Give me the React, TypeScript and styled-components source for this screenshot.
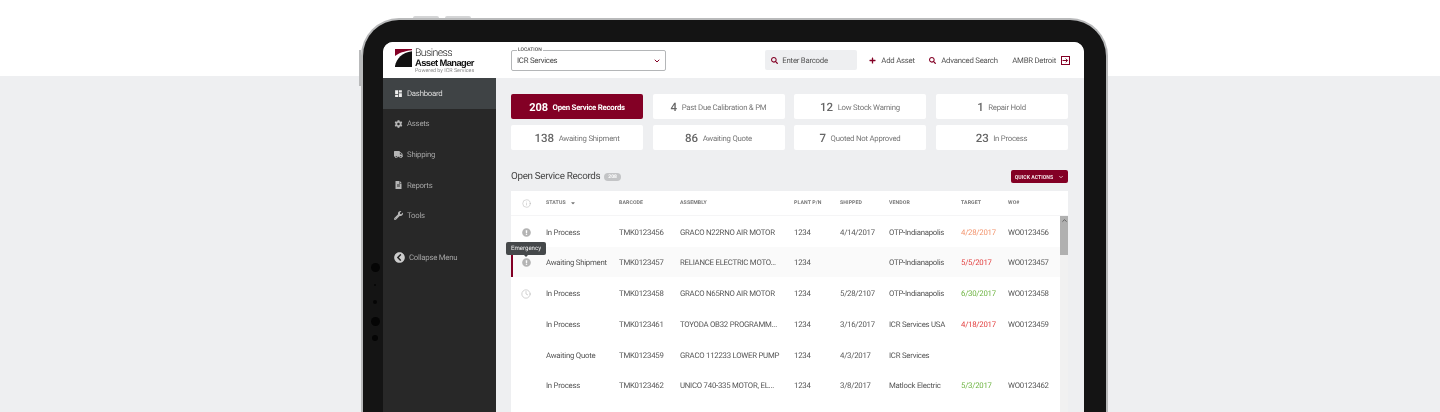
import React from 'react';
import styled, { createGlobalStyle } from 'styled-components';
import {
  FaCog,
  FaTruck,
  FaFileAlt,
  FaWrench,
  FaChevronCircleLeft,
  FaSearch,
  FaPlus,
  FaExclamationCircle,
  FaCaretDown,
} from 'react-icons/fa';
import { MdDashboard } from 'react-icons/md';
import { ChevronDown, ChevronUp, Info, Clock } from 'lucide-react';

const MAROON = '#830025';
const BODY_TEXT = 'font-size: 7.8px; letter-spacing: -0.25px;';

const GlobalStyle = createGlobalStyle`
  html, body { margin: 0; padding: 0; height: 412px; overflow: hidden; }
  body {
    background: linear-gradient(#fff 0, #fff 76px, #eeeff1 76px);
    font-family: Roboto, "Liberation Sans", sans-serif;
    color: #555;
    text-rendering: geometricPrecision;
  }
`;

type Flag = 'none' | 'alert' | 'clock';
type Tone = 'orange' | 'red' | 'green' | undefined;

type Record = {
  flag: Flag;
  status: string;
  barcode: string;
  assembly: string;
  shipped: string;
  vendor: string;
  target: string;
  tone?: Tone;
  wo: string;
};

const navItems = [
  { label: 'Dashboard', icon: <MdDashboard size={9} />, active: true },
  { label: 'Assets', icon: <FaCog size={8} /> },
  { label: 'Shipping', icon: <FaTruck size={9} /> },
  { label: 'Reports', icon: <FaFileAlt size={8} /> },
  { label: 'Tools', icon: <FaWrench size={9} /> },
];

const stats = [
  { num: '208', label: 'Open Service Records', primary: true },
  { num: '4', label: 'Past Due Calibration & PM' },
  { num: '12', label: 'Low Stock Warning' },
  { num: '1', label: 'Repair Hold' },
  { num: '138', label: 'Awaiting Shipment' },
  { num: '86', label: 'Awaiting Quote' },
  { num: '7', label: 'Quoted Not Approved' },
  { num: '23', label: 'In Process' },
];

const records: Record[] = [
  { flag: 'alert', status: 'In Process', barcode: 'TMK0123456', assembly: 'GRACO N22RNO AIR MOTOR', shipped: '4/14/2017', vendor: 'OTP-Indianapolis', target: '4/28/2017', tone: 'orange', wo: 'WO0123456' },
  { flag: 'alert', status: 'Awaiting Shipment', barcode: 'TMK0123457', assembly: 'RELIANCE ELECTRIC MOTO...', shipped: '', vendor: 'OTP-Indianapolis', target: '5/5/2017', tone: 'red', wo: 'WO0123457' },
  { flag: 'clock', status: 'In Process', barcode: 'TMK0123458', assembly: 'GRACO N65RNO AIR MOTOR', shipped: '5/28/2107', vendor: 'OTP-Indianapolis', target: '6/30/2017', tone: 'green', wo: 'WO0123458' },
  { flag: 'none', status: 'In Process', barcode: 'TMK0123461', assembly: 'TOYODA OB32 PROGRAMM...', shipped: '3/16/2017', vendor: 'ICR Services USA', target: '4/18/2017', tone: 'red', wo: 'WO0123459' },
  { flag: 'none', status: 'Awaiting Quote', barcode: 'TMK0123459', assembly: 'GRACO 112233 LOWER PUMP', shipped: '4/3/2017', vendor: 'ICR Services', target: '', wo: '' },
  { flag: 'none', status: 'In Process', barcode: 'TMK0123462', assembly: 'UNICO 740-335 MOTOR, EL...', shipped: '3/8/2017', vendor: 'Matlock Electric', target: '5/3/2017', tone: 'green', wo: 'WO0123462' },
];

const toneColor = { orange: '#f2936c', red: '#e23b3b', green: '#6cb33f' };

const COLUMNS = '35px 73px 61px 114px 46px 49px 72px 47px 1fr';

const Stage = styled.div`
  display: flex;
  padding: 18px 0 0 361px;
  height: 394px;
  overflow: hidden;
`;

const Tablet = styled.div`
  position: relative;
  box-sizing: border-box;
  width: 747px;
  height: 394px;
  flex: none;
  padding: 22px 22px 0 20px;
  background: #141414;
  border: solid #b9babb;
  border-width: 2px 2px 0 2px;
  border-radius: 38px 38px 0 0;
  filter: blur(0.3px);
`;

const TopButton = styled.span<{ $left: number }>`
  position: absolute;
  top: -4px;
  left: ${(p) => p.$left}px;
  width: 26px;
  height: 2px;
  border-radius: 2px 2px 0 0;
  background: #d4d5d6;
`;

const SideButton = styled.span`
  position: absolute;
  left: -4px;
  top: 30px;
  width: 2px;
  height: 36px;
  background: #b9babb;
`;

const Lens = styled.span<{ $top: number; $size: number }>`
  position: absolute;
  left: ${(p) => 12 - p.$size / 2}px;
  top: ${(p) => p.$top - p.$size / 2}px;
  width: ${(p) => p.$size}px;
  height: ${(p) => p.$size}px;
  border-radius: 50%;
  background: #050505;
`;

const Screen = styled.div`
  height: 370px;
  display: flex;
  flex-direction: column;
  border-radius: 10px 10px 0 0;
  overflow: hidden;
  background: #eeeff1;
`;

const Header = styled.header`
  height: 36px;
  flex: none;
  display: flex;
  align-items: center;
  padding-right: 14px;
  background: #fff;
`;

const LogoWrap = styled.div`
  width: 128px;
  flex: none;
  box-sizing: border-box;
  padding: 3px 0 0 12px;
  display: flex;
  align-items: flex-start;
  gap: 3px;
`;

const LogoText = styled.div`
  display: flex;
  flex-direction: column;
  color: #222;
`;

const LogoLight = styled.span`
  margin-top: -1px;
  font-size: 10.5px;
  line-height: 10px;
  letter-spacing: -0.6px;
  font-weight: 300;
`;

const LogoBold = styled.span`
  font-family: "Liberation Sans", sans-serif;
  font-size: 9.4px;
  line-height: 10px;
  font-weight: 700;
  letter-spacing: -0.6px;
  color: #111;
`;

const LogoSmall = styled.span`
  font-size: 5.4px;
  line-height: 6px;
  color: #888;
`;

const LocationBox = styled.fieldset`
  box-sizing: border-box;
  margin: -2px 0 0 0;
  padding: 0 4px 0 5px;
  width: 155px;
  height: 23px;
  min-width: 0;
  display: flex;
  align-items: center;
  justify-content: space-between;
  border: 1px solid #b4b6b8;
  border-radius: 2px;
  ${BODY_TEXT}
  color: #444;
  & > legend {
    margin-left: 0;
    padding: 0 1px;
    font-size: 5px;
    letter-spacing: 0;
    line-height: 5px;
    font-weight: 500;
    color: #555;
  }
`;

const LocationValue = styled.div`
  display: flex;
  flex: 1;
  align-items: center;
  justify-content: space-between;
  margin-top: -1px;
`;

const Barcode = styled.div`
  width: 92px;
  height: 20px;
  box-sizing: border-box;
  margin-left: auto;
  margin-right: 12px;
  padding-left: 6px;
  display: flex;
  align-items: center;
  gap: 4px;
  background: #eeeff1;
  border-radius: 2px;
  ${BODY_TEXT}
  color: #555;
  & svg { color: ${MAROON}; }
`;

const HeaderLink = styled.span`
  display: inline-flex;
  align-items: center;
  gap: 5px;
  margin-right: 14.5px;
  ${BODY_TEXT}
  color: #555;
  white-space: nowrap;
  & svg { color: ${MAROON}; flex: none; }
  &:last-child { margin-right: 0; }
`;

const Body = styled.div`
  flex: 1;
  min-height: 0;
  display: flex;
`;

const Sidebar = styled.nav`
  width: 113px;
  flex: none;
  background: #282828;
`;

const NavItem = styled.div<{ $active?: boolean }>`
  height: 30.6px;
  display: flex;
  align-items: center;
  gap: 4px;
  padding-left: 11px;
  ${BODY_TEXT}
  color: ${(p) => (p.$active ? '#ddd' : '#a3a3a3')};
  background: ${(p) => (p.$active ? '#3f4345' : 'transparent')};
  & > svg { flex: none; width: 9px; color: ${(p) => (p.$active ? '#eee' : '#b5b5b5')}; }
`;

const Collapse = styled(NavItem)`
  margin-top: 11px;
  & > svg { width: 11px; height: 11px; color: #ccc; }
`;

const Main = styled.main`
  flex: 1;
  min-width: 0;
  padding: 16px 16px 0 15px;
`;

const StatGrid = styled.div`
  display: grid;
  grid-template-columns: repeat(4, 132px);
  column-gap: 9.5px;
  row-gap: 6px;
`;

const StatCard = styled.div<{ $primary?: boolean }>`
  height: 25px;
  box-sizing: border-box;
  padding-top: 1px;
  display: flex;
  align-items: center;
  justify-content: center;
  gap: 4.5px;
  border-radius: 2px;
  background: ${(p) => (p.$primary ? MAROON : '#fff')};
  color: ${(p) => (p.$primary ? '#fff' : '#777')};
  ${BODY_TEXT}
  font-weight: ${(p) => (p.$primary ? 700 : 400)};
  white-space: nowrap;
`;

const StatNum = styled.span<{ $primary?: boolean }>`
  font-size: ${(p) => (p.$primary ? 11 : 11.5)}px;
  letter-spacing: 0;
  font-weight: ${(p) => (p.$primary ? 700 : 500)};
  color: ${(p) => (p.$primary ? '#fff' : '#666')};
`;

const TitleRow = styled.div`
  height: 21px;
  margin-top: 16px;
  padding-bottom: 4px;
  display: flex;
  align-items: center;
  justify-content: space-between;
`;

const Title = styled.h2`
  margin: 0;
  display: flex;
  align-items: center;
  gap: 4px;
  font-size: 9.8px;
  letter-spacing: -0.3px;
  font-weight: 400;
  color: #444;
`;

const CountPill = styled.span`
  padding: 0 4px;
  height: 8px;
  line-height: 8px;
  border-radius: 4px;
  background: #c3c4c6;
  color: #fff;
  font-size: 5px;
  letter-spacing: 0;
  font-weight: 700;
`;

const QuickActions = styled.button`
  width: 57px;
  height: 13px;
  padding: 0;
  border: 0;
  border-radius: 2px;
  display: flex;
  align-items: center;
  justify-content: center;
  gap: 5px;
  background: ${MAROON};
  color: #f2dfe4;
  font-family: inherit;
  font-size: 5.2px;
  font-weight: 700;
`;

const Table = styled.div`
  position: relative;
  background: #fff;
  height: 300px;
`;

const HeadRow = styled.div`
  display: grid;
  grid-template-columns: ${COLUMNS};
  align-items: center;
  height: 25px;
  border-bottom: 1px solid #f5f5f6;
  box-sizing: border-box;
`;

const HeadCell = styled.div`
  display: flex;
  align-items: center;
  gap: 4px;
  font-size: 5.2px;
  font-weight: 700;
  letter-spacing: 0.1px;
  color: #777;
  white-space: nowrap;
`;

const InfoCell = styled.div`
  display: flex;
  justify-content: center;
  padding-right: 5px;
  color: #aaa;
`;

const Row = styled.div<{ $flagged?: boolean; $height: number }>`
  display: grid;
  grid-template-columns: ${COLUMNS};
  align-items: center;
  box-sizing: border-box;
  height: ${(p) => p.$height}px;
  padding: 1px 8px 0 0;
  ${BODY_TEXT}
  color: #555;
  white-space: nowrap;
  background: ${(p) => (p.$flagged ? '#fafafa' : 'transparent')};
`;

const FlagCell = styled.div`
  display: flex;
  justify-content: center;
  padding-right: 5px;
  color: #b4b4b4;
`;

const RedBar = styled.span`
  position: absolute;
  left: 0;
  top: 56px;
  width: 1.5px;
  height: 30px;
  background: ${MAROON};
`;

const Tooltip = styled.span`
  position: absolute;
  left: -5px;
  top: 51px;
  width: 40px;
  height: 13px;
  display: flex;
  align-items: center;
  justify-content: center;
  border-radius: 2px;
  background: #45484a;
  color: #f1f1f1;
  font-size: 6.1px;
  &::after {
    content: '';
    position: absolute;
    left: 18px;
    bottom: -2px;
    border: solid transparent;
    border-width: 2px 2px 0 2px;
    border-top-color: #45484a;
  }
`;

const ScrollTrack = styled.div`
  position: absolute;
  right: 0;
  top: 25px;
  bottom: 0;
  width: 8px;
  background: #f1f1f1;
`;

const ScrollArrow = styled.div`
  height: 8px;
  display: flex;
  justify-content: center;
  align-items: center;
  color: #555;
  background: #b0b0b0;
`;

const ScrollThumb = styled.div`
  height: 31px;
  background: #b0b0b0;
`;

const Target = styled.span<{ $tone?: Tone }>`
  color: ${(p) => (p.$tone ? toneColor[p.$tone] : '#555')};
`;

const ExitIcon = () => (
  <svg width="9" height="9" viewBox="0 0 9 9" fill="none" stroke="currentColor" strokeWidth="1">
    <rect x="0.5" y="0.5" width="8" height="8" />
    <path d="M1.5 4.5h5M4.7 2.6l1.9 1.9-1.9 1.9" />
  </svg>
);

const LogoMark = () => (
  <svg width="17" height="18" viewBox="0 0 17 18">
    <path d="M0 0h17v1.2C9 2 4 4 0 7z" fill={MAROON} />
    <path d="M17 2.2V18H0v-1C1.5 9.5 7 3.4 17 2.2z" fill="#111" />
  </svg>
);

const flagIcon = (flag: Flag) => {
  if (flag === 'alert') return <FaExclamationCircle size={9} />;
  if (flag === 'clock') return <Clock size={10} strokeWidth={1.4} />;
  return null;
};

const rowHeights = [31, 30, 32, 30, 31, 30];

export default function App() {
  return (
    <>
      <GlobalStyle />
      <Stage>
        <Tablet>
          <TopButton $left={50} />
          <TopButton $left={82} />
          <SideButton />
          <Lens $top={247} $size={9} />
          <Lens $top={265} $size={2} />
          <Lens $top={282} $size={4} />
          <Lens $top={301} $size={9} />
          <Lens $top={318} $size={6} />
          <Screen>
            <Header>
              <LogoWrap>
                <LogoMark />
                <LogoText>
                  <LogoLight>Business</LogoLight>
                  <LogoBold>Asset Manager</LogoBold>
                  <LogoSmall>Powered by ICR Services</LogoSmall>
                </LogoText>
              </LogoWrap>
              <LocationBox>
                <legend>LOCATION</legend>
                <LocationValue>
                  ICR Services
                  <ChevronDown size={8} strokeWidth={3} color={MAROON} />
                </LocationValue>
              </LocationBox>
              <Barcode>
                <FaSearch size={7} />
                Enter Barcode
              </Barcode>
              <HeaderLink>
                <FaPlus size={7} />
                Add Asset
              </HeaderLink>
              <HeaderLink>
                <FaSearch size={7} />
                Advanced Search
              </HeaderLink>
              <HeaderLink>
                AMBR Detroit
                <ExitIcon />
              </HeaderLink>
            </Header>
            <Body>
              <Sidebar>
                {navItems.map((item) => (
                  <NavItem key={item.label} $active={item.active}>
                    {item.icon}
                    {item.label}
                  </NavItem>
                ))}
                <Collapse>
                  <FaChevronCircleLeft />
                  Collapse Menu
                </Collapse>
              </Sidebar>
              <Main>
                <StatGrid>
                  {stats.map((s) => (
                    <StatCard key={s.label} $primary={s.primary}>
                      <StatNum $primary={s.primary}>{s.num}</StatNum>
                      {s.label}
                    </StatCard>
                  ))}
                </StatGrid>
                <TitleRow>
                  <Title>
                    Open Service Records
                    <CountPill>208</CountPill>
                  </Title>
                  <QuickActions>
                    QUICK ACTIONS
                    <ChevronDown size={6} strokeWidth={3} />
                  </QuickActions>
                </TitleRow>
                <Table>
                  <HeadRow>
                    <InfoCell>
                      <Info size={9} strokeWidth={1.2} />
                    </InfoCell>
                    <HeadCell>
                      STATUS <FaCaretDown size={6} />
                    </HeadCell>
                    <HeadCell>BARCODE</HeadCell>
                    <HeadCell>ASSEMBLY</HeadCell>
                    <HeadCell>PLANT P/N</HeadCell>
                    <HeadCell>SHIPPED</HeadCell>
                    <HeadCell>VENDOR</HeadCell>
                    <HeadCell>TARGET</HeadCell>
                    <HeadCell>WO#</HeadCell>
                  </HeadRow>
                  {records.map((r, i) => (
                    <Row key={r.barcode} $flagged={i === 1} $height={rowHeights[i]}>
                      <FlagCell>{flagIcon(r.flag)}</FlagCell>
                      <div>{r.status}</div>
                      <div>{r.barcode}</div>
                      <div>{r.assembly}</div>
                      <div>1234</div>
                      <div>{r.shipped}</div>
                      <div>{r.vendor}</div>
                      <Target $tone={r.tone}>{r.target}</Target>
                      <div>{r.wo}</div>
                    </Row>
                  ))}
                  <RedBar />
                  <Tooltip>Emergency</Tooltip>
                  <ScrollTrack>
                    <ScrollArrow>
                      <ChevronUp size={7} strokeWidth={3} />
                    </ScrollArrow>
                    <ScrollThumb />
                  </ScrollTrack>
                </Table>
              </Main>
            </Body>
          </Screen>
        </Tablet>
      </Stage>
    </>
  );
}
